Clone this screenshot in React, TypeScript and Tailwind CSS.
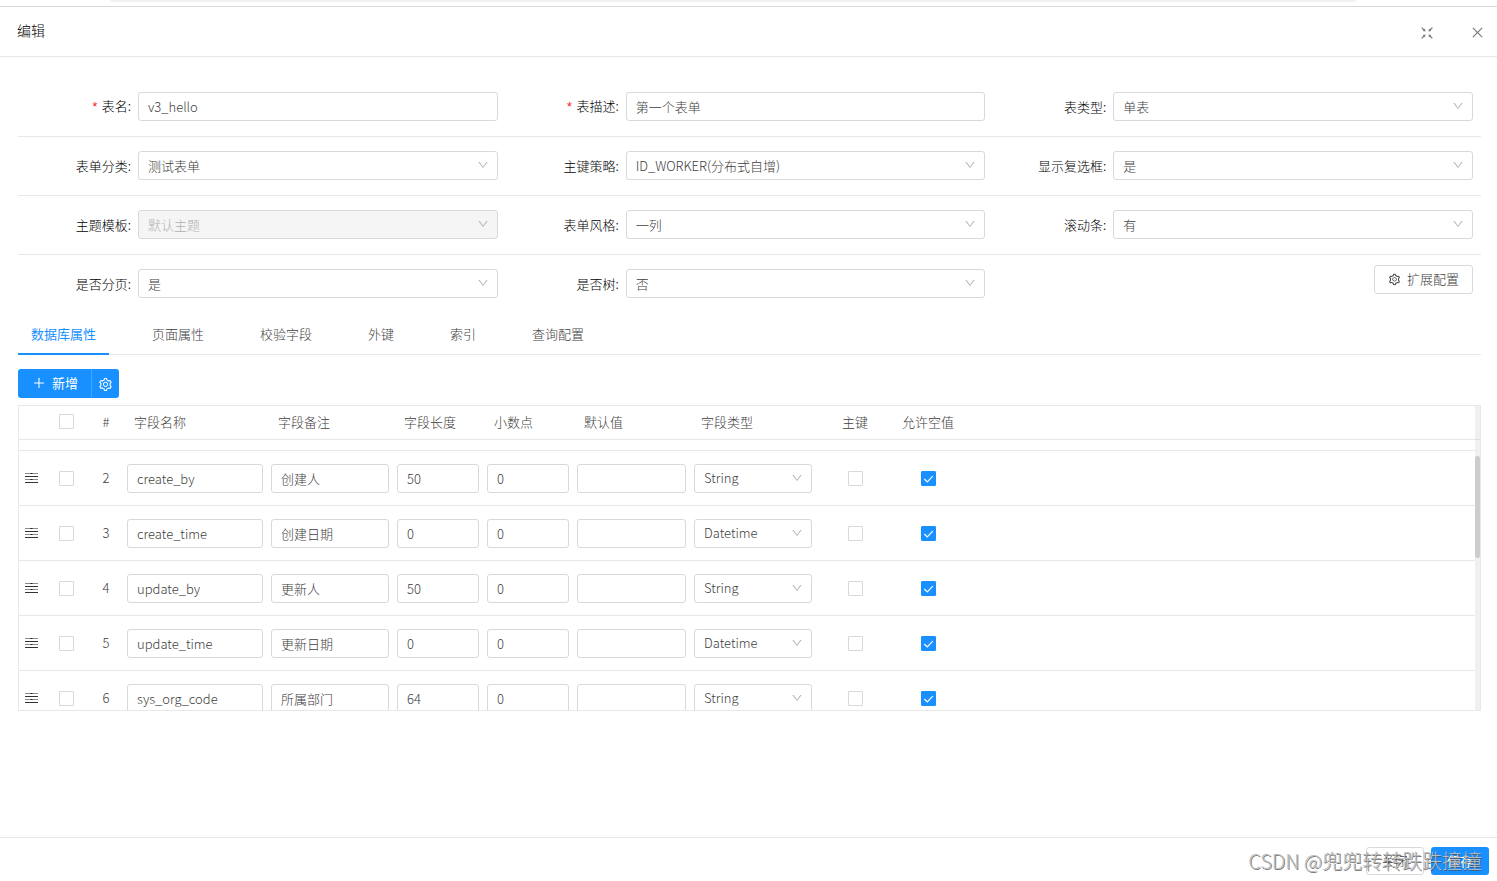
import { useState } from "react";
import type { ReactNode } from "react";
import {
    AiOutlineClose,
    AiOutlineDown,
    AiOutlineFullscreenExit,
    AiOutlinePlus,
    AiOutlineSetting,
} from "react-icons/ai";
import clsx from "clsx";

type FieldType = "String" | "Datetime";

interface FieldRow {
    index: number;
    name: string;
    remark: string;
    length: string;
    point: string;
    defaultValue: string;
    type: FieldType;
    primary: boolean;
    nullable: boolean;
}

const rows: FieldRow[] = [
    { index: 2, name: "create_by", remark: "创建人", length: "50", point: "0", defaultValue: "", type: "String", primary: false, nullable: true },
    { index: 3, name: "create_time", remark: "创建日期", length: "0", point: "0", defaultValue: "", type: "Datetime", primary: false, nullable: true },
    { index: 4, name: "update_by", remark: "更新人", length: "50", point: "0", defaultValue: "", type: "String", primary: false, nullable: true },
    { index: 5, name: "update_time", remark: "更新日期", length: "0", point: "0", defaultValue: "", type: "Datetime", primary: false, nullable: true },
    { index: 6, name: "sys_org_code", remark: "所属部门", length: "64", point: "0", defaultValue: "", type: "String", primary: false, nullable: true },
];

const tabs = ["数据库属性", "页面属性", "校验字段", "外键", "索引", "查询配置"];

const controlClass =
    "block h-[29px] w-full rounded-[3px] border border-[#d9d9d9] px-[9px] text-[13px] outline-none focus:border-[#1890ff]";

interface SelectBoxProps {
    id?: string;
    label?: string;
    value: string;
    options?: string[];
    disabled?: boolean;
}

function SelectBox({ id, label, value, options = [value], disabled }: SelectBoxProps) {
    return (
        <div className="relative w-full">
            <select
                id={id}
                aria-label={label}
                defaultValue={value}
                disabled={disabled}
                className={clsx(
                    controlClass,
                    "appearance-none",
                    disabled ? "cursor-not-allowed bg-[#f5f5f5] text-[#b0b0b0] opacity-100" : "bg-white text-[#404040]"
                )}
            >
                {options.map((option) => (
                    <option key={option}>{option}</option>
                ))}
            </select>
            <AiOutlineDown className="pointer-events-none absolute top-2 right-[9px] h-3 w-3 text-[#b4b4b4]" />
        </div>
    );
}

function TextBox({ id, label, value }: { id?: string; label?: string; value: string }) {
    return (
        <input id={id} aria-label={label} defaultValue={value} className={clsx(controlClass, "bg-white text-[#404040]")} />
    );
}

/** Label on the left, control on the right. */
function FormItem({ id, label, required, children }: { id: string; label: string; required?: boolean; children: ReactNode }) {
    return (
        <div className="flex items-center pt-[14px] pr-2">
            <label htmlFor={id} className="w-[120px] shrink-0 pr-[7px] text-right text-black">
                {required && <span className="mr-[3px] font-['Liberation_Mono',monospace] font-normal text-[#f5222d]">*</span>}
                {label}:
            </label>
            {children}
        </div>
    );
}

function FormRow({ last, children }: { last?: boolean; children: ReactNode }) {
    return (
        <div className={clsx("grid grid-cols-3 items-start", last ? "pb-[14px]" : "border-b border-[#e8e8e8] pb-[15px]")}>
            {children}
        </div>
    );
}

function CheckBox({ label, checked = false }: { label: string; checked?: boolean }) {
    return (
        <span className="relative mx-auto block h-[15px] w-[15px]">
            <input
                type="checkbox"
                aria-label={label}
                defaultChecked={checked}
                className="peer block h-[15px] w-[15px] appearance-none rounded-[1px] border border-[#d9d9d9] bg-white checked:border-[#1890ff] checked:bg-[#1890ff]"
            />
            <svg viewBox="0 0 15 15" className="pointer-events-none absolute inset-0 hidden h-[15px] w-[15px] peer-checked:block">
                <path d="M3.3 8l3 3L11.8 5.2" fill="none" stroke="#fff" strokeWidth="1.2" />
            </svg>
        </span>
    );
}

function DragIcon() {
    return (
        <svg viewBox="0 0 13 10" className="ml-[6px] h-[10px] w-[13px]">
            <path d="M0 0.5h13M0 6.5h13" stroke="#8c8c8c" strokeWidth="1" />
            <path d="M0 3.5h13M0 9.5h13" stroke="#333" strokeWidth="1.2" />
            <path d="M5.5 0h2v1h-2zM5.5 6h2v1h-2z" fill="#222" />
        </svg>
    );
}

function FieldTable() {
    return (
        <div className="flex h-[306px] overflow-hidden border border-[#e8e8e8]">
            <div className="min-w-0 flex-1 overflow-hidden">
                <table className="w-full table-fixed border-separate border-spacing-0 text-[13px] text-[#404040] [&_td]:border-b [&_td]:border-[#e8e8e8] [&_td]:py-0 [&_th]:border-b [&_th]:border-[#e8e8e8] [&_th]:pt-0 [&_th]:pb-[2px] [&_th]:font-light">
                    <colgroup>
                        <col className="w-[24px]" />
                        <col className="w-[46px]" />
                        <col className="w-[34px]" />
                        <col className="w-[144px]" />
                        <col className="w-[126px]" />
                        <col className="w-[90px]" />
                        <col className="w-[90px]" />
                        <col className="w-[117px]" />
                        <col className="w-[126px]" />
                        <col className="w-[78px]" />
                        <col className="w-[68px]" />
                        <col />
                    </colgroup>
                    <thead>
                        <tr className="h-[34px] text-left">
                            <th />
                            <th><CheckBox label="全选" /></th>
                            <th className="text-center">#</th>
                            <th className="pl-[11px]">字段名称</th>
                            <th className="pl-[11px]">字段备注</th>
                            <th className="pl-[11px]">字段长度</th>
                            <th className="pl-[11px]">小数点</th>
                            <th className="pl-[11px]">默认值</th>
                            <th className="pl-[11px]">字段类型</th>
                            <th className="text-center">主键</th>
                            <th className="text-center">允许空值</th>
                            <th />
                        </tr>
                    </thead>
                    <tbody>
                        {/* Tail of the row that is scrolled away under the header */}
                        <tr className="h-[11px]">
                            <td colSpan={12} />
                        </tr>
                        {rows.map((row) => (
                            <tr key={row.index} className="h-[55px]">
                                <td><DragIcon /></td>
                                <td><CheckBox label={`选择 ${row.index}`} /></td>
                                <td className="text-center">{row.index}</td>
                                <td className="px-1"><TextBox label="字段名称" value={row.name} /></td>
                                <td className="px-1"><TextBox label="字段备注" value={row.remark} /></td>
                                <td className="px-1"><TextBox label="字段长度" value={row.length} /></td>
                                <td className="px-1"><TextBox label="小数点" value={row.point} /></td>
                                <td className="px-1"><TextBox label="默认值" value={row.defaultValue} /></td>
                                <td className="px-1"><SelectBox label="字段类型" value={row.type} options={["String", "Datetime"]} /></td>
                                <td><CheckBox label="主键" checked={row.primary} /></td>
                                <td><CheckBox label="允许空值" checked={row.nullable} /></td>
                                <td />
                            </tr>
                        ))}
                    </tbody>
                </table>
            </div>
            {/* Scrollbar */}
            <div className="w-[5px] bg-[#f0f0f0]">
                <div className="h-[34px] border-b border-[#e0e0e0]" />
                <div className="mt-4 h-[102px] rounded-sm bg-[#cdcdcd]" />
            </div>
        </div>
    );
}

export default function App() {
    const [activeTab, setActiveTab] = useState(tabs[0]);

    return (
        <div className="flex min-h-screen flex-col bg-white font-['Noto_Sans_CJK_SC',sans-serif] text-[13px] font-light text-[#404040]">
            {/* Browser edge above the modal */}
            <div className="h-[7px] border-b border-[#d9d9d9] pr-[141px] pl-[110px]">
                <div className="h-[2px] rounded-b-full bg-[#f1f1f1]" />
            </div>

            <header className="flex h-[50px] items-center justify-between border-b border-[#e8e8e8] pr-3 pl-[17px]">
                <h1 className="pb-1 text-sm font-light text-black">编辑</h1>
                <div className="flex items-center gap-[35px] pt-[2px] text-[#7a7a7a]">
                    <button type="button" aria-label="退出全屏"><AiOutlineFullscreenExit className="h-4 w-4" /></button>
                    <button type="button" aria-label="关闭窗口"><AiOutlineClose className="h-[15px] w-[15px]" /></button>
                </div>
            </header>

            <main className="flex-1 pt-[21px] pr-4 pl-[18px]">
                <form>
                    <FormRow>
                        <FormItem id="tableName" label="表名" required>
                            <TextBox id="tableName" value="v3_hello" />
                        </FormItem>
                        <FormItem id="tableTxt" label="表描述" required>
                            <TextBox id="tableTxt" value="第一个表单" />
                        </FormItem>
                        <FormItem id="tableType" label="表类型">
                            <SelectBox id="tableType" value="单表" />
                        </FormItem>
                    </FormRow>
                    <FormRow>
                        <FormItem id="formCategory" label="表单分类">
                            <SelectBox id="formCategory" value="测试表单" />
                        </FormItem>
                        <FormItem id="idType" label="主键策略">
                            <SelectBox id="idType" value="ID_WORKER(分布式自增)" />
                        </FormItem>
                        <FormItem id="isCheckbox" label="显示复选框">
                            <SelectBox id="isCheckbox" value="是" />
                        </FormItem>
                    </FormRow>
                    <FormRow>
                        <FormItem id="themeTemplate" label="主题模板">
                            <SelectBox id="themeTemplate" value="默认主题" disabled />
                        </FormItem>
                        <FormItem id="formTemplate" label="表单风格">
                            <SelectBox id="formTemplate" value="一列" />
                        </FormItem>
                        <FormItem id="scroll" label="滚动条">
                            <SelectBox id="scroll" value="有" />
                        </FormItem>
                    </FormRow>
                    <FormRow last>
                        <FormItem id="isPage" label="是否分页">
                            <SelectBox id="isPage" value="是" />
                        </FormItem>
                        <FormItem id="isTree" label="是否树">
                            <SelectBox id="isTree" value="否" />
                        </FormItem>
                        <div className="flex justify-end pt-[10px] pr-2">
                            <button type="button" className="flex h-[29px] items-center gap-[6px] rounded-[3px] border border-[#d9d9d9] px-[13px] pb-px">
                                <AiOutlineSetting className="h-[13px] w-[13px]" />
                                扩展配置
                            </button>
                        </div>
                    </FormRow>
                </form>

                <div role="tablist" className="mt-1 flex h-[39px] gap-[30px] border-b border-[#e8e8e8]">
                    {tabs.map((tab) => (
                        <button
                            key={tab}
                            type="button"
                            role="tab"
                            aria-selected={tab === activeTab}
                            onClick={() => setActiveTab(tab)}
                            className={clsx(
                                "-mb-px border-b-2 px-[13px] pb-[2px]",
                                tab === activeTab ? "border-[#1890ff] font-normal text-[#1890ff]" : "border-transparent"
                            )}
                        >
                            {tab}
                        </button>
                    ))}
                </div>

                <div className="mt-[14px] mb-[7px] flex h-[29px] font-normal text-white">
                    <button type="button" className="flex items-center gap-[6px] rounded-l-[3px] border-r border-[#40a9ff] bg-[#1890ff] pr-[13px] pb-px pl-[14px]">
                        <AiOutlinePlus className="h-[14px] w-[14px]" />
                        新增
                    </button>
                    <button type="button" aria-label="列设置" className="rounded-r-[3px] bg-[#1890ff] px-[6px] pt-px">
                        <AiOutlineSetting className="h-[15px] w-[15px]" />
                    </button>
                </div>

                <FieldTable />
            </main>

            <footer className="relative flex h-[44px] items-start justify-end gap-[7px] border-t border-[#e8e8e8] pt-[9px] pr-2">
                <button type="button" className="h-[28px] rounded-[3px] border border-[#d9d9d9] px-[15px]">关闭</button>
                <button type="button" className="h-[28px] rounded-[3px] bg-[#1890ff] px-4 font-normal text-white">保存</button>
                <span className="pointer-events-none absolute top-2 right-[15px] text-[20px] leading-[29px] whitespace-nowrap text-[#bdbdbd] [text-shadow:1px_1px_0_rgba(70,70,70,0.7)]">
                    CSDN @兜兜转转跌跌撞撞
                </span>
            </footer>
        </div>
    );
}
